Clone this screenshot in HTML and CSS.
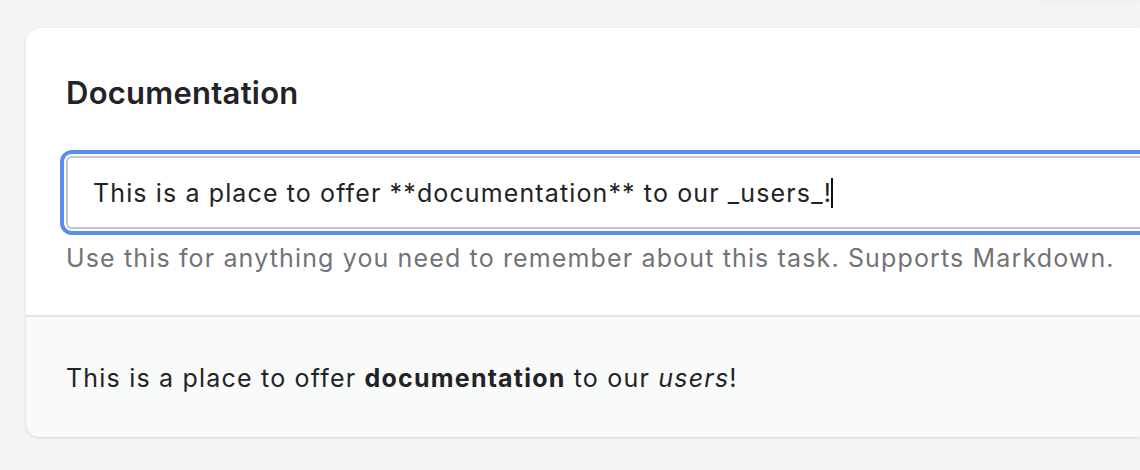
FILE: index.html
```html
<!DOCTYPE html>
<html lang="en">
<head>
<meta charset="utf-8">
<title>Documentation</title>
<link rel="stylesheet" href="styles.css">
</head>
<body>
<div class="page">
  <div class="prev-edge"></div>
  <section class="card">
    <div class="card-main">
      <h2 class="card-title">Documentation</h2>
      <div class="field">
        <div class="input">This is a place to offer **documentation** to our _users_!<span class="caret"></span></div>
      </div>
      <p class="help">Use this for anything you need to remember about this task. Supports Markdown.</p>
    </div>
    <div class="preview">
      <p>This is a place to offer <strong>documentation</strong> to our <em>users</em>!</p>
    </div>
  </section>
</div>
</body>
</html>
```

FILE: styles.css
```css
html, body {
  margin: 0;
  padding: 0;
  overflow: hidden;
  background: #f4f4f4;
}
body {
  font-family: Inter, "Noto Sans", "Liberation Sans", sans-serif;
  color: #222326;
  width: 1140px;
  height: 470px;
}
.page {
  display: flex;
  flex-direction: column;
  padding: 0 0 0 26px;
  overflow: hidden;
}
.prev-edge {
  height: 1px;
  margin: -1px 0 0 1014px;
  box-shadow: 0 1px 3px rgba(0,0,0,0.08);
}
.card {
  margin-top: 28px;
  background: #fff;
  border-radius: 14px 0 0 14px;
  box-shadow: 0 1px 3px rgba(0,0,0,0.12), 0 0 1px rgba(0,0,0,0.08);
  overflow: hidden;
  margin-bottom: 8px;
}
.card-main {
  padding: 47px 0 39px 40px;
  border-bottom: 2px solid #e3e4e5;
}
.card-title {
  margin: 0;
  font-size: 31px;
  line-height: 36px;
  font-weight: 600;
  letter-spacing: 0.25px;
  color: #222326;
}
.field {
  margin-top: 45px;
}
.input {
  box-sizing: border-box;
  height: 73px;
  padding: 17px 24px 0 25px;
  margin-right: -10px;
  font-size: 25px;
  line-height: 37px;
  letter-spacing: 1.12px;
  color: #222326;
  border: 2px solid #c6c7ca;
  border-radius: 6px;
  box-shadow: 0 0 0 2px #ffffff, 0 0 0 6px #5b8def;
  white-space: nowrap;
}
.caret {
  display: inline-block;
  width: 0;
  height: 30px;
  border-left: 2px solid #111;
  vertical-align: -6px;
  margin-left: -1px;
}
.help {
  margin: 11px 0 0 0;
  font-size: 25px;
  line-height: 36px;
  letter-spacing: 1.14px;
  color: #717379;
  white-space: nowrap;
}
.preview {
  background: #f9fafa;
  padding: 43px 0 41px 40px;
}
.preview p {
  margin: 0;
  font-size: 25px;
  line-height: 36px;
  letter-spacing: 1.2px;
  color: #222326;
}
.preview strong {
  font-weight: 700;
}
```
